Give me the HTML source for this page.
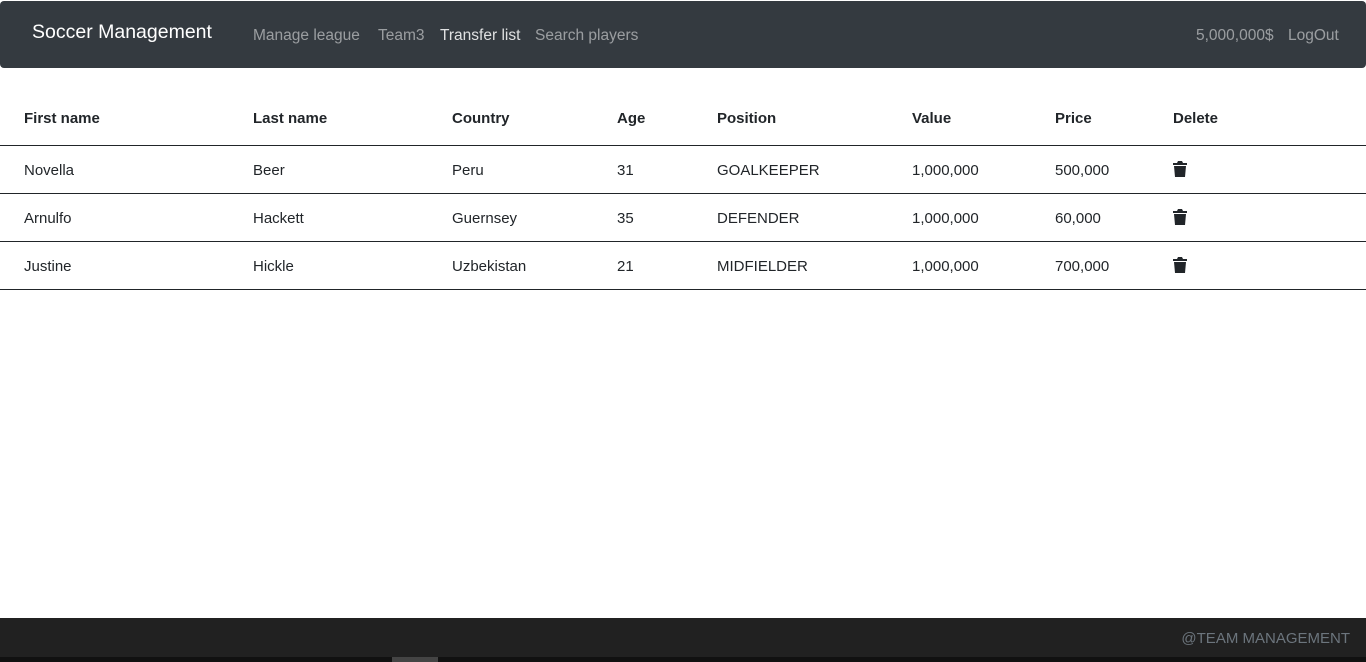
<!DOCTYPE html>
<html><head><style>
body{margin:0;width:1366px;height:662px;position:relative;overflow:hidden;background:#fff;font-family:"Liberation Sans",sans-serif;color:#212529;}
.nav{position:absolute;left:0;top:1px;width:1366px;height:67px;background:#343a40;border-radius:4px;}
.nav span{position:absolute;white-space:nowrap;}
.t{position:absolute;white-space:nowrap;font-size:15px;}
.b{font-weight:bold;}
.line{position:absolute;left:0;width:1366px;height:1px;background:#212529;}
.foot{position:absolute;left:0;top:618px;width:1366px;height:39px;background:#212121;}
.bot{position:absolute;left:0;top:657px;width:1366px;height:5px;background:#111;}
</style></head><body>
<div class="nav">
<span style="left:32px;top:20px;font-size:19.5px;color:#fff">Soccer Management</span>
<span style="left:253px;top:26px;font-size:15.5px;color:rgba(255,255,255,.5)">Manage league</span>
<span style="left:378px;top:26px;font-size:15.5px;color:rgba(255,255,255,.5)">Team3</span>
<span style="left:440px;top:26px;font-size:15.5px;color:rgba(255,255,255,.85)">Transfer list</span>
<span style="left:535px;top:26px;font-size:15.5px;color:rgba(255,255,255,.5)">Search players</span>
<span style="left:1196px;top:26px;font-size:15.5px;color:rgba(255,255,255,.5)">5,000,000$</span>
<span style="left:1288px;top:26px;font-size:15.5px;color:rgba(255,255,255,.5)">LogOut</span>
</div>
<div class="t b" style="left:24px;top:110px">First name</div>
<div class="t b" style="left:253px;top:110px">Last name</div>
<div class="t b" style="left:452px;top:110px">Country</div>
<div class="t b" style="left:617px;top:110px">Age</div>
<div class="t b" style="left:717px;top:110px">Position</div>
<div class="t b" style="left:912px;top:110px">Value</div>
<div class="t b" style="left:1055px;top:110px">Price</div>
<div class="t b" style="left:1173px;top:110px">Delete</div>
<div class="line" style="top:145px"></div>
<div class="line" style="top:193px"></div>
<div class="line" style="top:241px"></div>
<div class="line" style="top:289px"></div>

<div class="t" style="left:24px;top:162px">Novella</div><div class="t" style="left:253px;top:162px">Beer</div><div class="t" style="left:452px;top:162px">Peru</div><div class="t" style="left:617px;top:162px">31</div><div class="t" style="left:717px;top:162px">GOALKEEPER</div><div class="t" style="left:912px;top:162px">1,000,000</div><div class="t" style="left:1055px;top:162px">500,000</div>
<div class="t" style="left:24px;top:210px">Arnulfo</div><div class="t" style="left:253px;top:210px">Hackett</div><div class="t" style="left:452px;top:210px">Guernsey</div><div class="t" style="left:617px;top:210px">35</div><div class="t" style="left:717px;top:210px">DEFENDER</div><div class="t" style="left:912px;top:210px">1,000,000</div><div class="t" style="left:1055px;top:210px">60,000</div>
<div class="t" style="left:24px;top:258px">Justine</div><div class="t" style="left:253px;top:258px">Hickle</div><div class="t" style="left:452px;top:258px">Uzbekistan</div><div class="t" style="left:617px;top:258px">21</div><div class="t" style="left:717px;top:258px">MIDFIELDER</div><div class="t" style="left:912px;top:258px">1,000,000</div><div class="t" style="left:1055px;top:258px">700,000</div>

<svg style="position:absolute;left:1173px;top:161px" width="14" height="16" viewBox="0 0 14 16"><path d="M0 2h4l1-2h4l1 2h4v2H0z M1 5h12l-1 11H2z" fill="#212529"/></svg>
<svg style="position:absolute;left:1173px;top:209px" width="14" height="16" viewBox="0 0 14 16"><path d="M0 2h4l1-2h4l1 2h4v2H0z M1 5h12l-1 11H2z" fill="#212529"/></svg>
<svg style="position:absolute;left:1173px;top:257px" width="14" height="16" viewBox="0 0 14 16"><path d="M0 2h4l1-2h4l1 2h4v2H0z M1 5h12l-1 11H2z" fill="#212529"/></svg>

<div class="foot"><span style="position:absolute;right:16px;top:12px;font-size:15px;color:#6c757d">@TEAM MANAGEMENT</span></div>
<div class="bot"><div style="position:absolute;left:392px;top:0;width:46px;height:5px;background:#444"></div></div>
</body></html>
